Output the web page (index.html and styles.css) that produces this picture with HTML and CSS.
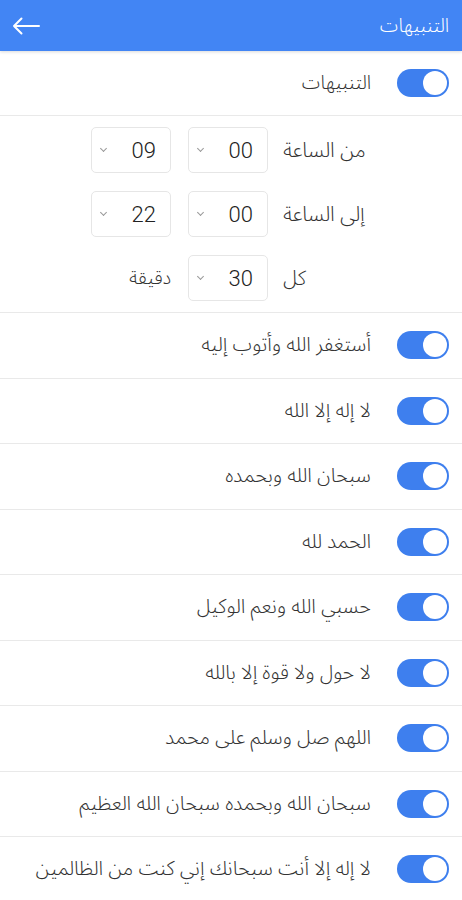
FILE: index.html
```html
<!DOCTYPE html>
<html lang="ar" dir="rtl">
<head>
<meta charset="utf-8">
<title>التنبيهات</title>
<link rel="stylesheet" href="styles.css">
</head>
<body>
<header class="topbar">
  <h1 class="title">التنبيهات</h1>
  <button class="back" aria-label="رجوع">
    <svg width="28" height="18" viewBox="0 0 28 18"><path d="M27 9H2M9.5 1.5 2 9l7.5 7.5" fill="none" stroke="#fff" stroke-width="2" stroke-linecap="round" stroke-linejoin="round"/></svg>
  </button>
</header>
<main>
  <div class="row">
    <span class="switch"><span class="knob"></span></span>
    <span class="label">التنبيهات</span>
  </div>
  <section class="times">
    <div class="trow">
      <span class="tlabel">من الساعة</span>
      <span class="select"><span class="val">00</span><span class="chev"></span></span>
      <span class="select"><span class="val">09</span><span class="chev"></span></span>
    </div>
    <div class="trow">
      <span class="tlabel">إلى الساعة</span>
      <span class="select"><span class="val">00</span><span class="chev"></span></span>
      <span class="select"><span class="val">22</span><span class="chev"></span></span>
    </div>
    <div class="trow">
      <span class="tlabel">كل</span>
      <span class="select"><span class="val">30</span><span class="chev"></span></span>
      <span class="unit">دقيقة</span>
    </div>
  </section>
  <div class="row"><span class="switch"><span class="knob"></span></span><span class="label">أستغفر الله وأتوب إليه</span></div>
  <div class="row"><span class="switch"><span class="knob"></span></span><span class="label">لا إله إلا الله</span></div>
  <div class="row"><span class="switch"><span class="knob"></span></span><span class="label">سبحان الله وبحمده</span></div>
  <div class="row"><span class="switch"><span class="knob"></span></span><span class="label">الحمد لله</span></div>
  <div class="row"><span class="switch"><span class="knob"></span></span><span class="label">حسبي الله ونعم الوكيل</span></div>
  <div class="row"><span class="switch"><span class="knob"></span></span><span class="label">لا حول ولا قوة إلا بالله</span></div>
  <div class="row"><span class="switch"><span class="knob"></span></span><span class="label">اللهم صل وسلم على محمد</span></div>
  <div class="row"><span class="switch"><span class="knob"></span></span><span class="label">سبحان الله وبحمده سبحان الله العظيم</span></div>
  <div class="row"><span class="switch"><span class="knob"></span></span><span class="label">لا إله إلا أنت سبحانك إني كنت من الظالمين</span></div>
</main>
</body>
</html>
```
FILE: styles.css
```css
* { box-sizing: border-box; }
html, body { margin: 0; padding: 0; }
body {
  direction: rtl;
  background: #fff;
  font-family: "Noto Sans Arabic", "DejaVu Sans", sans-serif;
  color: #333;
  width: 462px;
  overflow: hidden;
}
.topbar {
  height: 51px;
  background: #4285f4;
  display: flex;
  align-items: center;
  justify-content: space-between;
  padding: 0 13px 0 12px;
  box-shadow: 0 1px 3px rgba(0,0,0,0.15);
  position: relative;
  z-index: 1;
}
.title {
  margin: 0;
  font-size: 19px;
  font-weight: 300;
  color: #fff;
}
.back {
  border: 0;
  background: none;
  padding: 0;
  display: flex;
  cursor: pointer;
}
.row {
  height: 65.5px;
  display: flex;
  align-items: center;
  gap: 26px;
  padding-right: 13px;
  border-bottom: 1px solid #e9e9e9;
}
.row:first-child { height: 65px; }
.label {
  font-size: 20px;
  font-weight: 300;
  color: #333;
  white-space: nowrap;
}
.row:first-child .label { font-size: 19px; }
.switch {
  flex: none;
  direction: ltr;
  width: 52px;
  height: 28px;
  border-radius: 14px;
  background: #3e7fee;
  display: flex;
  align-items: center;
  justify-content: flex-end;
  padding: 0 2px;
}
.knob {
  width: 24px;
  height: 24px;
  border-radius: 50%;
  background: #fff;
}
.times {
  padding: 11px 95px 9px 0;
  display: flex;
  flex-direction: column;
  gap: 18px;
  border-bottom: 1px solid #e9e9e9;
  height: 197px;
}
.trow {
  display: flex;
  align-items: center;
  height: 46px;
}
.tlabel {
  flex: none;
  width: 84px;
  text-align: left;
  font-size: 20.5px;
  font-weight: 300;
  color: #333;
  margin-left: 15px;
  white-space: nowrap;
}
.select {
  flex: none;
  width: 80px;
  height: 46px;
  border: 1px solid #e6e6e6;
  border-radius: 5px;
  display: flex;
  align-items: center;
  justify-content: space-between;
  padding: 0 14px 0 9px;
  margin-left: 17px;
}
.val {
  font-family: Roboto, "Liberation Sans", sans-serif;
  font-size: 22px;
  font-weight: 300;
  color: #222;
}
.chev {
  width: 5px;
  height: 5px;
  border-right: 1px solid #999;
  border-bottom: 1px solid #999;
  transform: rotate(45deg);
  margin-top: -3px;
}
.unit {
  flex: none;
  width: 80px;
  text-align: right;
  font-size: 19px;
  font-weight: 300;
  color: #333;
}
```
